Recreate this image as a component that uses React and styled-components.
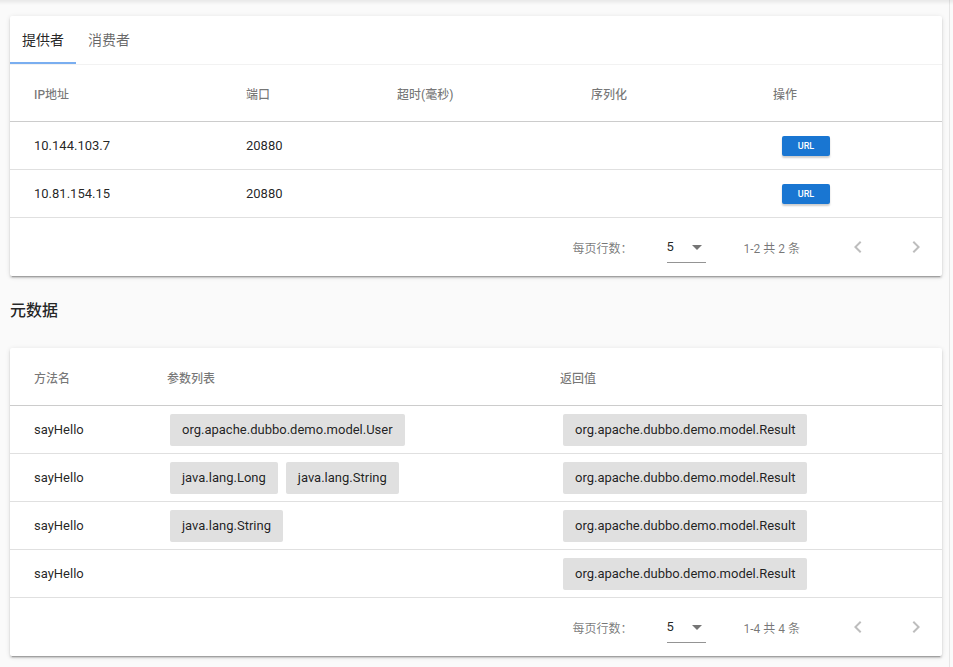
import React from 'react';
import styled, { createGlobalStyle } from 'styled-components';

const GlobalStyle = createGlobalStyle`
  html, body {
    margin: 0;
    padding: 0;
    background: #fafafa;
    font-family: Roboto, "Noto Sans CJK SC", "Noto Sans", sans-serif;
    color: rgba(0, 0, 0, 0.87);
  }
`;

const providers = [
  { ip: '10.144.103.7', port: '20880' },
  { ip: '10.81.154.15', port: '20880' },
];

const methods = [
  { name: 'sayHello', params: ['org.apache.dubbo.demo.model.User'], ret: 'org.apache.dubbo.demo.model.Result' },
  { name: 'sayHello', params: ['java.lang.Long', 'java.lang.String'], ret: 'org.apache.dubbo.demo.model.Result' },
  { name: 'sayHello', params: ['java.lang.String'], ret: 'org.apache.dubbo.demo.model.Result' },
  { name: 'sayHello', params: [], ret: 'org.apache.dubbo.demo.model.Result' },
];

const ChevronLeft = () => (
  <svg width="24" height="24" viewBox="0 0 24 24">
    <path d="M15.41 7.41L14 6l-6 6 6 6 1.41-1.41L10.83 12z" fill="currentColor" />
  </svg>
);

const ChevronRight = () => (
  <svg width="24" height="24" viewBox="0 0 24 24">
    <path d="M10 6L8.59 7.41 13.17 12l-4.58 4.59L10 18l6-6z" fill="currentColor" />
  </svg>
);

const Caret = () => (
  <svg width="24" height="24" viewBox="0 0 24 24">
    <path d="M7 10l5 5 5-5z" fill="currentColor" />
  </svg>
);

const Footer = ({ range }) => (
  <FooterBar>
    <FooterLabel>每页行数：</FooterLabel>
    <Select>
      <span>5</span>
      <CaretWrap><Caret /></CaretWrap>
    </Select>
    <RangeText>{range}</RangeText>
    <PageButtons>
      <PageBtn><ChevronLeft /></PageBtn>
      <PageBtn><ChevronRight /></PageBtn>
    </PageButtons>
  </FooterBar>
);

const App = () => {
  return (
    <>
      <GlobalStyle />
      <TopShadow />
      <Main>
        <Card>
          <Tabs>
            <Tab active>提供者</Tab>
            <Tab>消费者</Tab>
          </Tabs>
          <Table bordered>
            <colgroup>
              <col style={{ width: 212 }} />
              <col style={{ width: 151 }} />
              <col style={{ width: 194 }} />
              <col style={{ width: 182 }} />
              <col />
            </colgroup>
            <thead>
              <tr>
                <Th>IP地址</Th>
                <Th>端口</Th>
                <Th>超时(毫秒)</Th>
                <Th>序列化</Th>
                <Th>操作</Th>
              </tr>
            </thead>
            <tbody>
              {providers.map((p) => (
                <tr key={p.ip}>
                  <Td>{p.ip}</Td>
                  <Td>{p.port}</Td>
                  <Td />
                  <Td />
                  <Td><UrlButton>URL</UrlButton></Td>
                </tr>
              ))}
            </tbody>
          </Table>
          <Footer range="1-2 共 2 条" />
        </Card>

        <Heading>元数据</Heading>

        <Card>
          <Table>
            <colgroup>
              <col style={{ width: 133 }} />
              <col style={{ width: 393 }} />
              <col />
            </colgroup>
            <thead>
              <tr>
                <Th>方法名</Th>
                <Th>参数列表</Th>
                <Th>返回值</Th>
              </tr>
            </thead>
            <tbody>
              {methods.map((m, i) => (
                <tr key={i}>
                  <Td>{m.name}</Td>
                  <Td chips>
                    {m.params.map((p, j) => (
                      <Chip key={j}>{p}</Chip>
                    ))}
                  </Td>
                  <Td chips><Chip>{m.ret}</Chip></Td>
                </tr>
              ))}
            </tbody>
          </Table>
          <Footer range="1-4 共 4 条" />
        </Card>
      </Main>
    </>
  );
};

export default App;

const TopShadow = styled.div`
  position: fixed;
  top: 0;
  left: 0;
  right: 0;
  height: 5px;
  background: linear-gradient(rgba(0, 0, 0, 0.07), rgba(0, 0, 0, 0));
  pointer-events: none;
`;

const Main = styled.div`
  width: 950px;
  min-height: 667px;
  box-sizing: border-box;
  padding: 16px 7px 11px 10px;
  border-right: 1px solid #e6e6e6;
`;

const Card = styled.div`
  background: #fff;
  border-radius: 2px;
  box-shadow: 0 3px 1px -2px rgba(0, 0, 0, 0.2), 0 2px 2px 0 rgba(0, 0, 0, 0.14),
    0 1px 5px 0 rgba(0, 0, 0, 0.12);
`;

const Tabs = styled.div`
  display: flex;
  height: 48px;
`;

const Tab = styled.div`
  display: flex;
  align-items: center;
  box-sizing: border-box;
  padding: 0 12px;
  font-size: 14px;
  color: ${({ active }) => (active ? 'rgba(0,0,0,0.87)' : 'rgba(0,0,0,0.6)')};
  border-bottom: 2px solid ${({ active }) => (active ? '#7aaef0' : 'transparent')};
`;

const Table = styled.table`
  width: 100%;
  border-collapse: collapse;
  table-layout: fixed;
  border-top: 1px solid ${({ bordered }) => (bordered ? '#f2f2f2' : 'transparent')};
`;

const Th = styled.th`
  height: 56px;
  padding: 0 24px;
  text-align: left;
  font-size: 12px;
  font-weight: 500;
  color: rgba(0, 0, 0, 0.54);
  border-bottom: 1px solid rgba(0, 0, 0, 0.2);
  white-space: nowrap;
`;

const Td = styled.td`
  height: 47px;
  padding: ${({ chips }) => (chips ? '0 0 0 23px' : '0 24px')};
  font-size: 13px;
  color: rgba(0, 0, 0, 0.87);
  border-bottom: 1px solid rgba(0, 0, 0, 0.12);
  white-space: nowrap;
`;

const UrlButton = styled.button`
  margin: 0 9px;
  width: 48px;
  height: 20px;
  border: none;
  border-radius: 2px;
  background: #1976d2;
  color: #fff;
  font-family: Roboto, sans-serif;
  font-size: 9px;
  font-weight: 500;
  box-shadow: 0 2px 2px rgba(0, 0, 0, 0.2);
  cursor: pointer;
`;

const Chip = styled.span`
  display: inline-flex;
  align-items: center;
  height: 32px;
  padding: 0 12px;
  margin: 0 4px;
  border-radius: 2px;
  background: #e0e0e0;
  font-size: 13px;
  color: rgba(0, 0, 0, 0.87);
  vertical-align: middle;
`;

const FooterBar = styled.div`
  display: flex;
  align-items: center;
  justify-content: flex-end;
  height: 58px;
  padding-right: 14px;
  font-size: 12px;
  color: rgba(0, 0, 0, 0.54);
`;

const FooterLabel = styled.span`
  margin-right: 34px;
`;

const Select = styled.div`
  display: flex;
  align-items: center;
  width: 39px;
  height: 32px;
  box-sizing: border-box;
  border-bottom: 1px solid rgba(0, 0, 0, 0.42);
  font-size: 13px;
  color: rgba(0, 0, 0, 0.87);
  margin-right: 38px;
  & > span {
    flex: 1;
  }
`;

const CaretWrap = styled.span`
  display: flex;
  color: rgba(0, 0, 0, 0.54);
  margin-right: -3px;
`;

const RangeText = styled.span`
  margin-right: 46px;
`;

const PageButtons = styled.div`
  display: flex;
  gap: 34px;
`;

const PageBtn = styled.span`
  display: flex;
  color: rgba(0, 0, 0, 0.26);
`;

const Heading = styled.h3`
  margin: 23px 0 25px;
  height: 24px;
  line-height: 24px;
  font-size: 16px;
  font-weight: 500;
`;
